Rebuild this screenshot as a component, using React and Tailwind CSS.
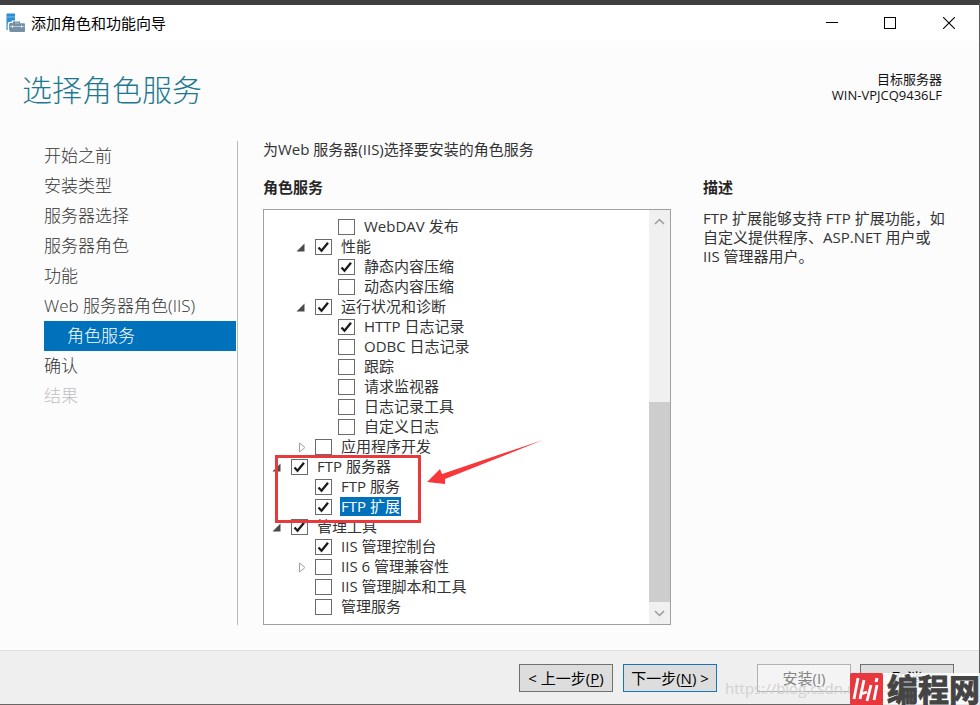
import { useState } from "react";

const steps = [
  { label: "开始之前" },
  { label: "安装类型" },
  { label: "服务器选择" },
  { label: "服务器角色" },
  { label: "功能" },
  { label: "Web 服务器角色(IIS)" },
  { label: "角色服务", active: true },
  { label: "确认" },
  { label: "结果", disabled: true },
];

const services = [
  { label: "WebDAV 发布", level: 2 },
  { label: "性能", level: 1, checked: true, node: "open" },
  { label: "静态内容压缩", level: 2, checked: true },
  { label: "动态内容压缩", level: 2 },
  { label: "运行状况和诊断", level: 1, checked: true, node: "open" },
  { label: "HTTP 日志记录", level: 2, checked: true },
  { label: "ODBC 日志记录", level: 2 },
  { label: "跟踪", level: 2 },
  { label: "请求监视器", level: 2 },
  { label: "日志记录工具", level: 2 },
  { label: "自定义日志", level: 2 },
  { label: "应用程序开发", level: 1, node: "closed" },
  { label: "FTP 服务器", level: 0, checked: true, node: "open" },
  { label: "FTP 服务", level: 1, checked: true },
  { label: "FTP 扩展", level: 1, checked: true, selected: true },
  { label: "管理工具", level: 0, checked: true, node: "open" },
  { label: "IIS 管理控制台", level: 1, checked: true },
  { label: "IIS 6 管理兼容性", level: 1, node: "closed" },
  { label: "IIS 管理脚本和工具", level: 1 },
  { label: "管理服务", level: 1 },
];

const indents = ["pl-2", "pl-8", "pl-[55px]"];

function ServerIcon() {
  return (
    <svg className="h-5 w-5 shrink-0" viewBox="0 0 20 20" aria-hidden="true">
      <rect x="1.500" y="0.500" width="8.500" height="16.500" fill="#2b8fd0" />
      <path d="M1.500 4h8.500" stroke="#8fcaec" strokeWidth="0.8" />
      <path d="M3.500 17.500v-6.500q0-1.500 1.500-1.500h2.500V8.300h8V9.500h3" fill="none" stroke="#fff" strokeWidth="1.600" />
      <path d="M8.500 10.500V9.200h6v1.300" fill="none" stroke="#6c8599" strokeWidth="1.200" />
      <rect x="4.500" y="10.300" width="15.500" height="8.700" rx="1" fill="#7690a6" />
      <path d="M5 13.500h14.500" stroke="#c9d6e0" strokeWidth="0.8" />
      <path d="M7.500 12.500v2M16.500 12.500v2" stroke="#fff" strokeWidth="1.100" />
    </svg>
  );
}

function TitleBar() {
  return (
    <div className="flex h-9 items-center bg-white pl-[5px]">
      <ServerIcon />
      <span className="ml-[6px] flex-1 text-[15px] leading-5 text-black">添加角色和功能向导</span>
      <button type="button" aria-label="最小化" className="flex h-9 w-[58px] items-center justify-center">
        <svg width="12" height="12" viewBox="0 0 12 12"><path d="M0 5.5h12" stroke="#000" /></svg>
      </button>
      <button type="button" aria-label="最大化" className="flex h-9 w-[58px] items-center justify-center">
        <svg width="12" height="12" viewBox="0 0 12 12"><rect x="0.5" y="0.5" width="11" height="11" fill="none" stroke="#000" /></svg>
      </button>
      <button type="button" aria-label="关闭" className="flex h-9 w-[60px] items-center justify-center">
        <svg width="12" height="12" viewBox="0 0 12 12"><path d="M0 0l12 12M12 0L0 12" stroke="#000" strokeWidth="1.1" /></svg>
      </button>
    </div>
  );
}

function Steps() {
  return (
    <nav className="w-[238px] shrink-0 border-r border-[#b9b9b9] pl-11 pr-px">
      <ul>
        {steps.map((step) => (
          <li key={step.label}>
            <a
              href="#"
              aria-current={step.active ? "step" : undefined}
              className={
                "block h-[30px] text-[17px] leading-[30px] font-light " +
                (step.active
                  ? "bg-[#0072bc] pl-[23px] text-white"
                  : step.disabled
                    ? "text-[#c0c0c0]"
                    : "text-[#333]")
              }
            >
              {step.label}
            </a>
          </li>
        ))}
      </ul>
    </nav>
  );
}

function Expander({ node }) {
  return (
    <span className="flex h-5 w-[19px] shrink-0 items-center">
      {node === "open" && (
        <svg width="9" height="9" viewBox="0 0 9 9"><path d="M8.5 0.5v8h-8z" fill="#4a4a4a" /></svg>
      )}
      {node === "closed" && (
        <svg className="ml-[3px]" width="7" height="11" viewBox="0 0 7 11"><path d="M0.5 1v9L6 5.500z" fill="#fff" stroke="#a0a0a0" /></svg>
      )}
    </span>
  );
}

function ServiceRow({ item }) {
  const [checked, setChecked] = useState(!!item.checked);
  return (
    <li className={"flex h-5 items-start " + indents[item.level]}>
      <Expander node={item.node} />
      <label className="flex items-start">
        <span className="grid pt-[2px]">
          <input
            type="checkbox"
            checked={checked}
            onChange={() => setChecked(!checked)}
            className="peer col-start-1 row-start-1 h-4 w-[17px] appearance-none border border-[#6b6b6b] bg-white"
          />
          <svg
            className="pointer-events-none col-start-1 row-start-1 hidden h-4 w-[17px] peer-checked:block"
            viewBox="0 0 17 16"
          >
            <path d="M3.500 8.500l3 3.300L13 3.800" fill="none" stroke="#1c1c1c" strokeWidth="2.300" />
          </svg>
        </span>
        <span
          className={
            "ml-2 px-px text-[15px] leading-[19px] whitespace-nowrap " +
            (item.selected ? "bg-[#0072bc] text-white" : "text-[#333]")
          }
        >
          {item.label}
        </span>
      </label>
    </li>
  );
}

function ScrollBar() {
  return (
    <div className="flex w-[21px] shrink-0 flex-col bg-[#f0f0f0]">
      <button type="button" aria-label="向上滚动" className="flex h-[22px] items-center justify-center">
        <svg width="11" height="7" viewBox="0 0 11 7"><path d="M1 6l4.500-4.500L10 6" fill="none" stroke="#9a9a9a" strokeWidth="1.500" /></svg>
      </button>
      <div className="flex flex-1 flex-col justify-end">
        <div className="h-[54%] bg-[#cdcdcd]" />
      </div>
      <button type="button" aria-label="向下滚动" className="flex h-[22px] items-center justify-center">
        <svg width="11" height="7" viewBox="0 0 11 7"><path d="M1 1l4.500 4.500L10 1" fill="none" stroke="#9a9a9a" strokeWidth="1.500" /></svg>
      </button>
    </div>
  );
}

function ServiceTree() {
  return (
    <div className="relative mt-[14px] flex border border-[#a0a0a0] bg-white">
      <ul className="flex-1 py-[7px]">
        {services.map((item) => (
          <ServiceRow key={item.label} item={item} />
        ))}
      </ul>
      <ScrollBar />
      <div className="pointer-events-none absolute top-[245px] left-[11px] h-[68px] w-[146px] border-3 border-[#e83a3d]" />
      <svg
        className="pointer-events-none absolute top-[229px] left-[163px]"
        width="118"
        height="48"
        viewBox="0 0 118 48"
      >
        <path d="M0 43L13 30l2 5L116 1 18 40l0 5z" fill="#f8373b" />
      </svg>
    </div>
  );
}

const buttonBase = "h-[28px] w-[94px] border text-[15px] leading-[26px] whitespace-nowrap ";

function Footer() {
  return (
    <footer className="relative flex h-[54px] items-start border-t border-[#dfdfdf] bg-[#efefef] pt-[13px] pr-[25px]">
      <div className="ml-auto flex">
        <button type="button" className={buttonBase + "border-[#707070] bg-[#dddddd] text-black"}>
          &lt; 上一步(<u className="underline-offset-2">P</u>)
        </button>
        <button type="button" className={buttonBase + "ml-[10px] border-[#1a74b8] bg-[#dddddd] text-black"}>
          下一步(<u className="underline-offset-2">N</u>) &gt;
        </button>
        <button type="button" disabled className={buttonBase + "ml-10 border-[#adb2b5] bg-[#f4f4f4] text-[#838383]"}>
          安装(<u className="underline-offset-2">I</u>)
        </button>
        <button type="button" className={buttonBase + "ml-[9px] border-[#707070] bg-[#dddddd] text-black"}>
          取消
        </button>
      </div>
      <span className="pointer-events-none absolute right-[106px] bottom-[6px] w-[148px] overflow-hidden text-[15px] leading-5 whitespace-nowrap text-[#d2d2d2]">
        https://blog.csdn.net/
      </span>
      <div className="pointer-events-none absolute -right-px -bottom-px flex h-8 items-center">
        <svg className="h-8 w-[33px]" viewBox="0 0 33 32">
          <rect width="33" height="32" rx="2" fill="#e8383d" />
          <path d="M8 5L4 26M14 7l-4 19M12 16l-1 5 6-2M21 12l-4 16M27 12l-3 15" fill="none" stroke="#fff" strokeWidth="2.800" />
          <path d="M27 5l-1 4" stroke="#fff" strokeWidth="3" />
        </svg>
        <span className="bg-white/85 pl-1 text-[31px] leading-8 font-bold text-[#444] [-webkit-text-stroke:1px_#444]">编程网</span>
      </div>
    </footer>
  );
}

export default function App() {
  return (
    <div className="flex min-h-screen flex-col border-t-5 border-r border-b border-t-[#404040] border-r-[#5a5a5a] border-b-[#6a6664] bg-[#fcfcfc] font-['Open_Sans','Noto_Sans_CJK_SC',sans-serif]">
      <TitleBar />
      <header className="flex h-[100px] items-start justify-between pt-[27px] pr-[37px] pl-[22px]">
        <h1 className="text-[30px] leading-[44px] font-light text-[#1f7891]">选择角色服务</h1>
        <p className="pt-[3px] text-right text-[13px] leading-4 text-[#111]">
          目标服务器
          <br />
          WIN-VPJCQ9436LF
        </p>
      </header>
      <div className="flex flex-1 pb-[25px]">
        <Steps />
        <main className="flex min-w-0 flex-1 pl-[25px]">
          <section className="min-w-0 flex-1">
            <p className="text-[15px] leading-4 text-[#333]">为Web 服务器(IIS)选择要安装的角色服务</p>
            <h2 className="mt-[22px] text-[15px] leading-4 font-bold text-[#262626]">角色服务</h2>
            <ServiceTree />
          </section>
          <section className="w-[308px] shrink-0 pt-[38px] pr-8 pl-8">
            <h2 className="text-[15px] leading-4 font-bold text-[#262626]">描述</h2>
            <p className="mt-[14px] text-[15px] leading-[19px] text-[#333]">
              FTP 扩展能够支持 FTP 扩展功能，如自定义提供程序、ASP.NET 用户或 IIS 管理器用户。
            </p>
          </section>
        </main>
      </div>
      <Footer />
    </div>
  );
}
